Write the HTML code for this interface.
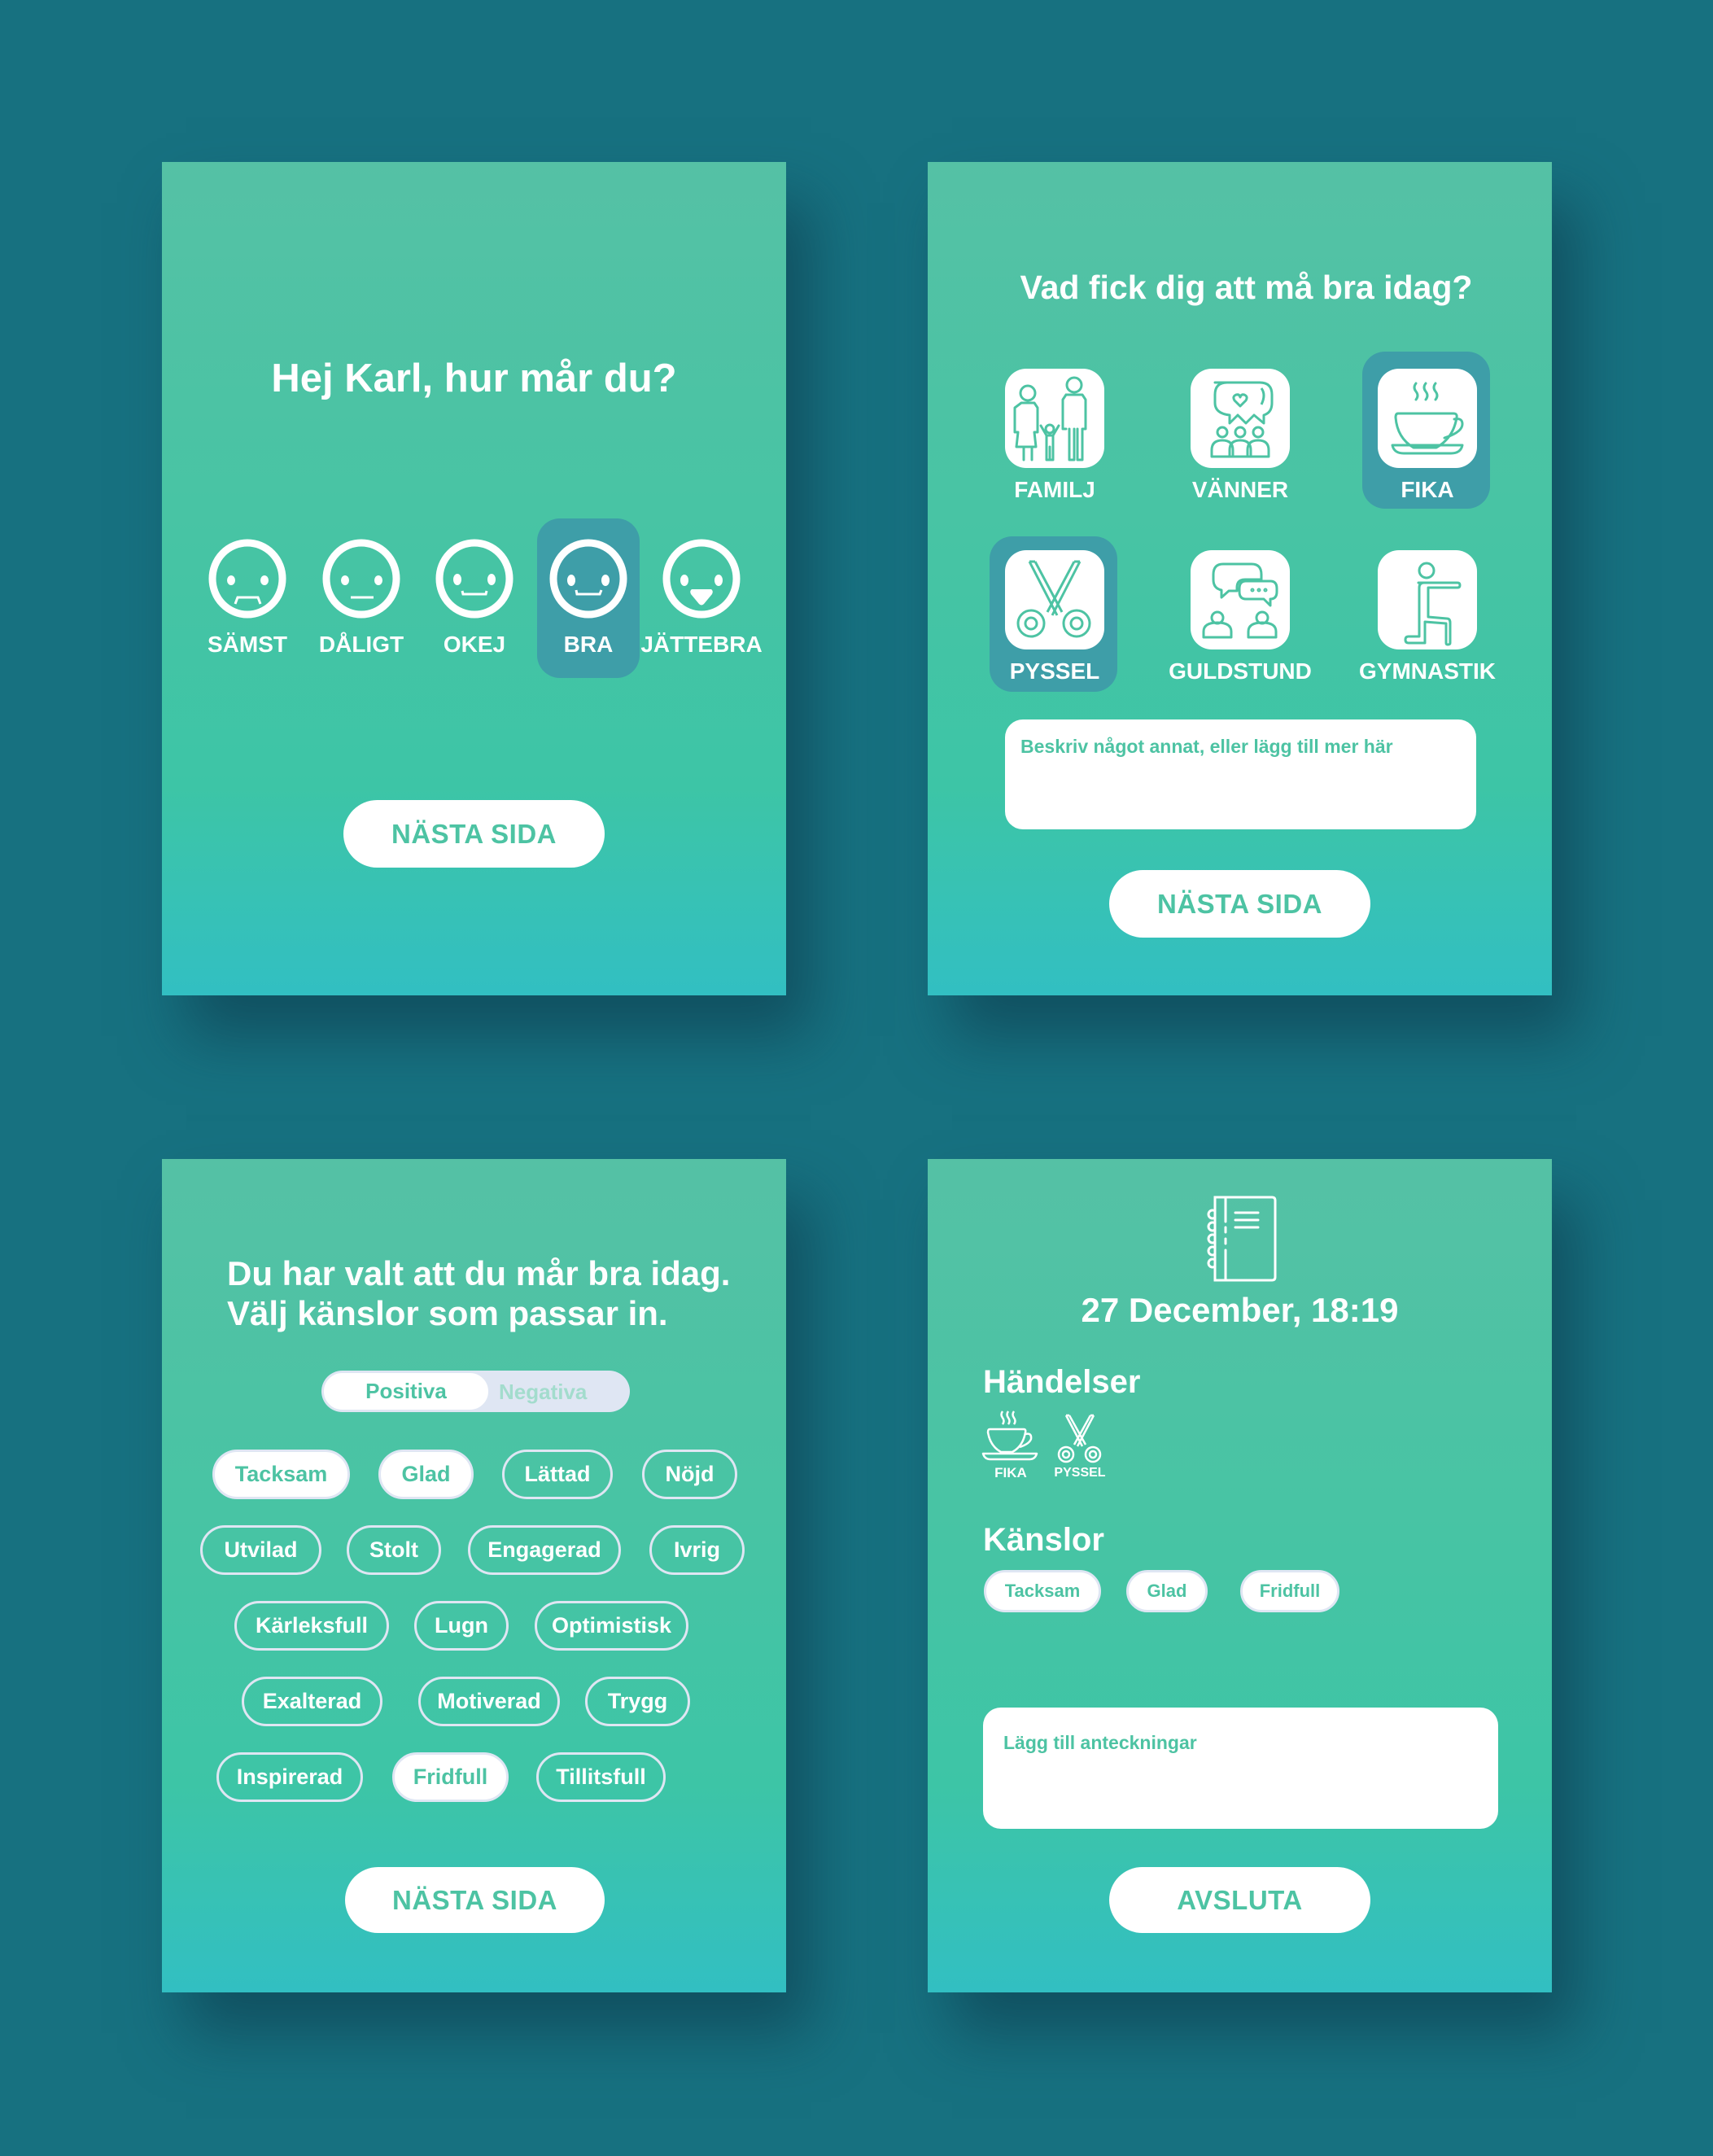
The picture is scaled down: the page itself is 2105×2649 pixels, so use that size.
<!DOCTYPE html>
<html><head><meta charset="utf-8">
<style>
*{margin:0;padding:0;box-sizing:border-box}
body{width:2105px;height:2649px;background:#177180;position:relative;overflow:hidden;font-family:"Liberation Sans",Arial,sans-serif;}
.abs{position:absolute}
.panel{position:absolute;width:767px;height:1024px;background:linear-gradient(180deg,#55c1a5 0%,#47c4a4 45%,#3dc5a6 75%,#32bfc2 100%);box-shadow:30px 50px 70px rgba(15,70,85,0.75);}
.t{position:absolute;color:#fff;font-weight:bold;white-space:nowrap}
.c{text-align:center}
.btn{position:absolute;background:#fff;border-radius:42px;color:#4dc3a3;font-weight:bold;font-size:33px;display:flex;align-items:center;justify-content:center;letter-spacing:0.5px}
.hl{position:absolute;background:#3e9ea8;border-radius:28px}
.tile{position:absolute;width:122px;height:122px;background:#fff;border-radius:26px}
.chip{position:absolute;height:61px;border:3px solid #dfe6f3;border-radius:31px;color:#fff;font-weight:bold;font-size:27px;display:flex;align-items:center;justify-content:center}
.chip.s{background:#fff;color:#4dc3a3}
.chip2{position:absolute;height:52px;border:3px solid #dfe6f3;border-radius:26px;background:#fff;color:#4dc3a3;font-weight:bold;font-size:22px;display:flex;align-items:center;justify-content:center}
.lbl{font-size:28px}
</style></head><body>

<!-- Panel 1 -->
<div class="panel" style="left:199px;top:199px"></div>
<div class="t c" style="left:199px;width:767px;top:437px;font-size:49px">Hej Karl, hur mår du?</div>
<div class="hl" style="left:660px;top:637px;width:126px;height:196px"></div>
<svg class="abs" style="left:199px;top:600px" width="767" height="220" viewBox="0 0 767 220">
 <g fill="none" stroke="#fff" stroke-width="9">
  <ellipse cx="105" cy="111" rx="43" ry="44"/>
  <ellipse cx="245" cy="111" rx="43" ry="44"/>
  <ellipse cx="384" cy="111" rx="43" ry="44"/>
  <ellipse cx="524" cy="111" rx="43" ry="44"/>
  <ellipse cx="663" cy="111" rx="43" ry="44"/>
 </g>
 <g fill="#fff">
  <ellipse cx="85" cy="113" rx="5" ry="6"/><ellipse cx="126" cy="113" rx="5" ry="6"/>
  <ellipse cx="225" cy="113" rx="5" ry="6"/><ellipse cx="266" cy="113" rx="5" ry="6"/>
  <ellipse cx="363" cy="112" rx="5" ry="7"/><ellipse cx="405" cy="112" rx="5" ry="7"/>
  <ellipse cx="503" cy="113" rx="5" ry="7"/><ellipse cx="545" cy="113" rx="5" ry="7"/>
  <ellipse cx="642" cy="113" rx="5" ry="7"/><ellipse cx="684" cy="113" rx="5" ry="7"/>
  <path d="M651 124 L675 124 Q678 126 676 130 L666 142 Q663 145 660 142 L650 130 Q648 126 651 124Z"/>
 </g>
 <g fill="none" stroke="#fff" stroke-width="3">
  <path d="M90 142 L93 134 L118 134 L121 142"/>
  <path d="M232 134 L260 134"/>
  <path d="M369 126 L370 130 L398 130 L399 126"/>
  <path d="M509 125 L510 130 L538 130 L540 125"/>
 </g>
</svg>
<div class="t c lbl" style="left:244px;width:120px;top:776px">SÄMST</div>
<div class="t c lbl" style="left:384px;width:120px;top:776px">DÅLIGT</div>
<div class="t c lbl" style="left:523px;width:120px;top:776px">OKEJ</div>
<div class="t c lbl" style="left:663px;width:120px;top:776px">BRA</div>
<div class="t c lbl" style="left:782px;width:160px;top:776px">JÄTTEBRA</div>
<div class="btn" style="left:422px;top:983px;width:321px;height:83px">NÄSTA SIDA</div>

<!-- Panel 2 -->
<div class="panel" style="left:1140px;top:199px"></div>
<div class="t c" style="left:1140px;width:783px;top:330px;font-size:41px">Vad fick dig att må bra idag?</div>
<div class="hl" style="left:1674px;top:432px;width:157px;height:193px"></div>
<div class="hl" style="left:1216px;top:659px;width:157px;height:191px"></div>
<div class="tile" style="left:1235px;top:453px"></div>
<div class="tile" style="left:1463px;top:453px"></div>
<div class="tile" style="left:1693px;top:453px"></div>
<div class="tile" style="left:1235px;top:676px"></div>
<div class="tile" style="left:1463px;top:676px"></div>
<div class="tile" style="left:1693px;top:676px"></div>
<svg class="abs" style="left:1235px;top:453px" width="122" height="122" viewBox="0 0 122 122"><g fill="none" stroke="#4dc3a3" stroke-width="3" stroke-linejoin="round" stroke-linecap="round">
 <circle cx="28" cy="30" r="9"/><path d="M20 42 h16 l4 6 v30 h-4 l2 18 h-24 l2-18 h-4 v-30 z"/><path d="M23 96 v16 M33 96 v16"/>
 <circle cx="85" cy="20" r="9"/><path d="M75 32 h20 l4 6 v36 h-4 v38 h-6 v-38 M79 74 v38 h6 v-38 M75 32 l-4 6 v36 h4"/>
 <circle cx="55" cy="74" r="5"/><path d="M44 70 l7 12 h8 l7-12 M51 82 v30 h8 v-30 M55 96 v16"/>
</g></svg>
<svg class="abs" style="left:1463px;top:453px" width="122" height="122" viewBox="0 0 122 122"><g fill="none" stroke="#4dc3a3" stroke-width="3" stroke-linejoin="round">
 <path d="M30 17 h55 q15 0 15 15 v10 q0 12-10 15 v10 l-12-10 l-10 10 l-10-10 l-10 10 v-10 q-18-2-18-15 v-10 q0-15 15-15z"/>
 <path d="M61 46 l-7-7 q-3-5 2-7 q4-1 5 3 q1-4 5-3 q5 2 2 7z"/><path d="M87 24 q6 8 0 20"/>
 <circle cx="39" cy="78" r="6"/><circle cx="61" cy="78" r="6"/><circle cx="83" cy="78" r="6"/>
 <path d="M26 108 v-8 q0-12 13-12 q13 0 13 12 v8z M48 108 v-8 q0-12 13-12 q13 0 13 12 v8z M70 108 v-8 q0-12 13-12 q13 0 13 12 v8z"/>
</g></svg>
<svg class="abs" style="left:1693px;top:453px" width="122" height="122" viewBox="0 0 122 122"><g fill="none" stroke="#4dc3a3" stroke-width="3" stroke-linejoin="round" stroke-linecap="round">
 <path d="M47 18 q-4 5 0 10 q4 5 0 10 M59 18 q-4 5 0 10 q4 5 0 10 M71 18 q-4 5 0 10 q4 5 0 10"/>
 <path d="M25 55 h68 q5 0 4 5 q-4 25-25 37 h-28 q-20-12-22-37 q0-5 3-5z"/><path d="M94 62 q10-2 10 6 q0 10-22 17"/>
 <path d="M18 94 h86 q-2 10-14 10 h-58 q-12 0-14-10z"/>
</g></svg>
<svg class="abs" style="left:1235px;top:676px" width="122" height="122" viewBox="0 0 122 122"><g fill="none" stroke="#4dc3a3" stroke-width="3" stroke-linejoin="round">
 <path d="M30 14 l34 66 M37 14 l-7 0 M37 14 l33 62"/><path d="M92 14 l-34 66 M85 14 l7 0 M85 14 l-33 62"/>
 <circle cx="32" cy="90" r="16"/><circle cx="32" cy="90" r="7"/><circle cx="88" cy="90" r="16"/><circle cx="88" cy="90" r="7"/>
</g></svg>
<svg class="abs" style="left:1463px;top:676px" width="122" height="122" viewBox="0 0 122 122"><g fill="none" stroke="#4dc3a3" stroke-width="3" stroke-linejoin="round">
 <path d="M40 17 h35 q12 0 12 13 v6 h-20 q-10 0-10 10 v4 h-10 l-9 8 v-9 q-10-2-10-13 v-6 q0-13 12-13z"/>
 <path d="M68 38 h30 q8 0 8 9 v4 q0 9-8 9 v8 l-8-8 h-22 q-8 0-8-9 v-4 q0-9 8-9z"/>
 <circle cx="76" cy="49" r="1"/><circle cx="84" cy="49" r="1"/><circle cx="92" cy="49" r="1"/>
 <circle cx="33" cy="83" r="7"/><circle cx="88" cy="83" r="7"/>
 <path d="M16 107 v-7 q0-11 17-11 q17 0 17 11 v7z M71 107 v-7 q0-11 17-11 q17 0 17 11 v7z"/>
</g></svg>
<svg class="abs" style="left:1693px;top:676px" width="122" height="122" viewBox="0 0 122 122"><g fill="none" stroke="#4dc3a3" stroke-width="3" stroke-linejoin="round" stroke-linecap="round">
 <circle cx="60" cy="25" r="9"/>
 <path d="M50 40 h48 q3 0 3 3 q0 3-3 3 h-36 v36 l23 2 q4 0 4 5 v25 q0 2-3 2 q-2 0-2-2 v-24 l-26-2 v26 h-20 q-4 0-4-4 q0-4 4-4 h13 v-60 q0-6 6-6z"/>
</g></svg>
<div class="t c lbl" style="left:1216px;width:160px;top:586px">FAMILJ</div>
<div class="t c lbl" style="left:1444px;width:160px;top:586px">VÄNNER</div>
<div class="t c lbl" style="left:1674px;width:160px;top:586px">FIKA</div>
<div class="t c lbl" style="left:1216px;width:160px;top:809px">PYSSEL</div>
<div class="t c lbl" style="left:1424px;width:200px;top:809px">GULDSTUND</div>
<div class="t c lbl" style="left:1654px;width:200px;top:809px">GYMNASTIK</div>
<div class="abs" style="left:1235px;top:884px;width:579px;height:135px;background:#fff;border-radius:22px"></div>
<div class="t" style="left:1254px;top:904px;font-size:23px;color:#4dc3a3">Beskriv något annat, eller lägg till mer här</div>
<div class="btn" style="left:1363px;top:1069px;width:321px;height:83px">NÄSTA SIDA</div>

<!-- Panel 3 -->
<div class="panel" style="left:199px;top:1424px"></div>
<div class="t" style="left:279px;top:1540px;font-size:42px;line-height:49px">Du har valt att du mår bra idag.<br>Välj känslor som passar in.</div>
<div class="abs" style="left:395px;top:1684px;width:379px;height:51px;background:#dfe6f3;border-radius:26px"></div>
<div class="abs" style="left:396px;top:1685px;width:206px;height:49px;background:#fff;border-radius:25px;border:2px solid #dfe6f3;color:#4dc3a3;font-weight:bold;font-size:26px;display:flex;align-items:center;justify-content:center">Positiva</div>
<div class="t" style="left:613px;top:1695px;font-size:26px;color:#a3dccd;font-weight:bold">Negativa</div>
<div class="chip s" style="left:261px;top:1781px;width:169px">Tacksam</div>
<div class="chip s" style="left:465px;top:1781px;width:117px">Glad</div>
<div class="chip" style="left:617px;top:1781px;width:136px">Lättad</div>
<div class="chip" style="left:789px;top:1781px;width:117px">Nöjd</div>
<div class="chip" style="left:246px;top:1874px;width:149px">Utvilad</div>
<div class="chip" style="left:426px;top:1874px;width:116px">Stolt</div>
<div class="chip" style="left:575px;top:1874px;width:188px">Engagerad</div>
<div class="chip" style="left:798px;top:1874px;width:117px">Ivrig</div>
<div class="chip" style="left:288px;top:1967px;width:190px">Kärleksfull</div>
<div class="chip" style="left:509px;top:1967px;width:116px">Lugn</div>
<div class="chip" style="left:657px;top:1967px;width:189px">Optimistisk</div>
<div class="chip" style="left:297px;top:2060px;width:173px">Exalterad</div>
<div class="chip" style="left:514px;top:2060px;width:174px">Motiverad</div>
<div class="chip" style="left:719px;top:2060px;width:129px">Trygg</div>
<div class="chip" style="left:266px;top:2153px;width:180px">Inspirerad</div>
<div class="chip s" style="left:482px;top:2153px;width:143px">Fridfull</div>
<div class="chip" style="left:659px;top:2153px;width:159px">Tillitsfull</div>
<div class="btn" style="left:424px;top:2294px;width:319px;height:81px">NÄSTA SIDA</div>

<!-- Panel 4 -->
<div class="panel" style="left:1140px;top:1424px"></div>
<svg class="abs" style="left:1478px;top:1466px" width="96" height="110" viewBox="0 0 96 110"><g fill="none" stroke="#fff" stroke-width="3" stroke-linecap="round">
 <path d="M15 5 h70 q4 0 4 4 v94 q0 4-4 4 h-70z"/><path d="M28 5 v30 M28 42 v6 M28 56 v6 M28 70 v37"/>
 <path d="M40 24 h28 M40 33 h28 M40 42 h28"/>
 <path d="M15 22 a5 5 0 1 0 0 8 M15 37 a5 5 0 1 0 0 8 M15 52 a5 5 0 1 0 0 8 M15 67 a5 5 0 1 0 0 8 M15 82 a5 5 0 1 0 0 8"/>
</g></svg>
<div class="t c" style="left:1140px;width:767px;top:1586px;font-size:42px">27 December, 18:19</div>
<div class="t" style="left:1208px;top:1676px;font-size:40px">Händelser</div>
<svg class="abs" style="left:1206px;top:1732px" width="72" height="64" viewBox="0 0 72 64"><g fill="none" stroke="#fff" stroke-width="2.5" stroke-linejoin="round">
 <path d="M26 2 q-3 4 0 8 q3 4 0 8 M33 2 q-3 4 0 8 q3 4 0 8 M40 2 q-3 4 0 8 q3 4 0 8"/>
 <path d="M10 24 h42 q3 0 2 4 q-3 17-16 24 h-14 q-13-7-16-24 q0-4 2-4z"/><path d="M54 30 q8-2 7 6 q-2 6-14 10"/>
 <path d="M2 54 h66 q-2 7-9 7 h-48 q-7 0-9-7z"/>
</g></svg>
<svg class="abs" style="left:1298px;top:1737px" width="58" height="62" viewBox="0 0 58 62"><g fill="none" stroke="#fff" stroke-width="2.5" stroke-linejoin="round">
 <path d="M12 2 l20 38 M16 2 l20 36 M12 2 h4"/><path d="M46 2 l-20 38 M42 2 l-20 36 M42 2 h4"/>
 <circle cx="12" cy="50" r="9"/><circle cx="12" cy="50" r="4"/><circle cx="45" cy="50" r="9"/><circle cx="45" cy="50" r="4"/>
</g></svg>
<div class="t c" style="left:1202px;width:80px;top:1800px;font-size:17px">FIKA</div>
<div class="t c" style="left:1282px;width:90px;top:1801px;font-size:16px">PYSSEL</div>
<div class="t" style="left:1208px;top:1870px;font-size:40px">Känslor</div>
<div class="chip2" style="left:1209px;top:1929px;width:144px">Tacksam</div>
<div class="chip2" style="left:1384px;top:1929px;width:100px">Glad</div>
<div class="chip2" style="left:1524px;top:1929px;width:122px">Fridfull</div>
<div class="abs" style="left:1208px;top:2098px;width:633px;height:149px;background:#fff;border-radius:22px"></div>
<div class="t" style="left:1233px;top:2128px;font-size:23px;color:#4dc3a3">Lägg till anteckningar</div>
<div class="btn" style="left:1363px;top:2294px;width:321px;height:81px">AVSLUTA</div>
</body></html>
